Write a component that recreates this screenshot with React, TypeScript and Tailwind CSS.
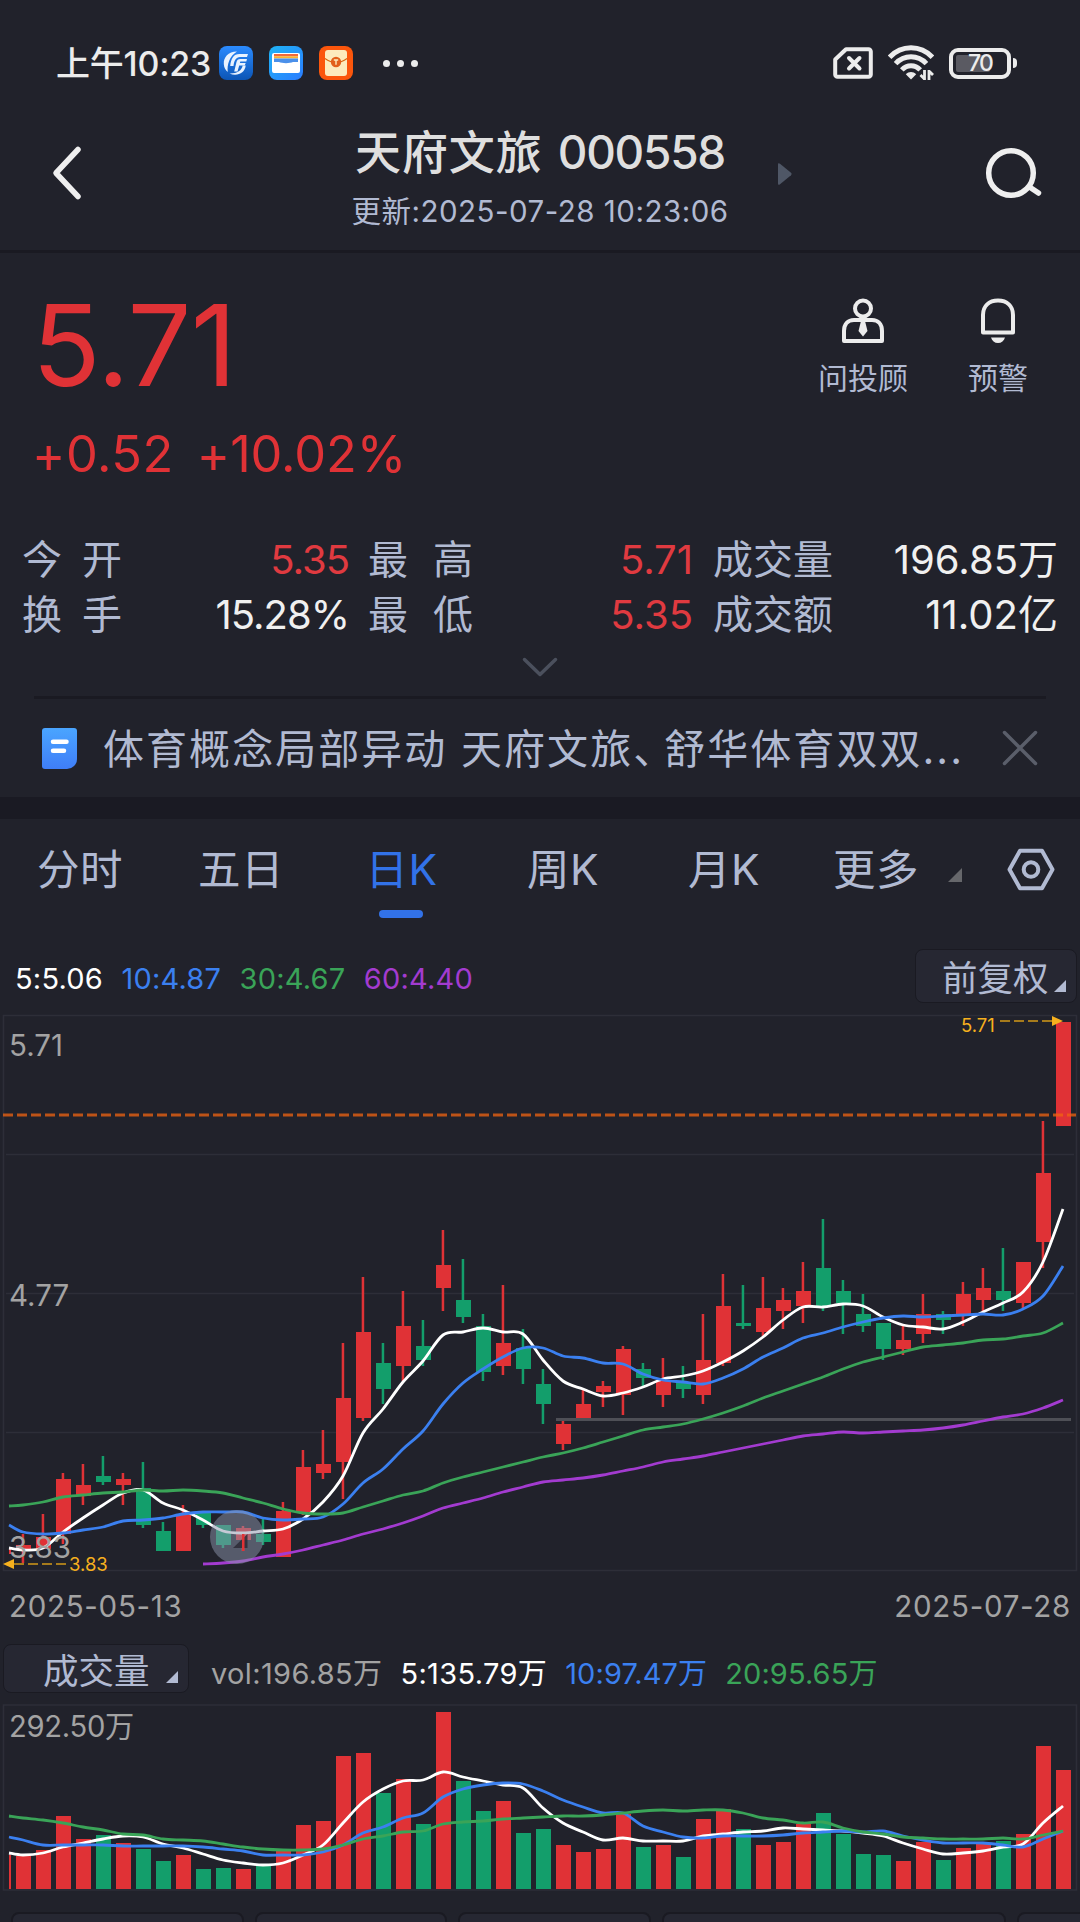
import type { ReactNode } from 'react';

type Dir = 'up' | 'down';
// direction, high, body top, body bottom, low
type Candle = [Dir, number, number, number, number];

const RED = '#e03236';
const GREEN = '#139e6b';
const BLUE = '#3b80f0';
const MA_GREEN = '#3aa458';
const PURPLE = '#a33bd0';

const STEP = 20;
const PLOT_LEFT = 9;

const candles: Candle[] = [
  ['up', 1548, 1548, 1554, 1554],
  ['up', 1534, 1545, 1549, 1563],
  ['up', 1514, 1537, 1549, 1549],
  ['up', 1473, 1479, 1534, 1544],
  ['up', 1464, 1485, 1496, 1505],
  ['down', 1456, 1476, 1482, 1485],
  ['up', 1473, 1479, 1485, 1505],
  ['down', 1462, 1488, 1525, 1528],
  ['down', 1522, 1531, 1551, 1551],
  ['up', 1505, 1514, 1551, 1551],
  ['down', 1511, 1513, 1525, 1528],
  ['down', 1525, 1525, 1545, 1548],
  ['up', 1526, 1528, 1540, 1551],
  ['down', 1519, 1534, 1542, 1545],
  ['up', 1502, 1511, 1557, 1557],
  ['up', 1450, 1467, 1512, 1515],
  ['up', 1430, 1464, 1473, 1479],
  ['up', 1343, 1398, 1462, 1499],
  ['up', 1277, 1332, 1418, 1421],
  ['down', 1343, 1363, 1389, 1404],
  ['up', 1291, 1326, 1366, 1381],
  ['down', 1320, 1346, 1360, 1366],
  ['up', 1230, 1265, 1288, 1311],
  ['down', 1259, 1300, 1317, 1323],
  ['down', 1314, 1326, 1372, 1381],
  ['up', 1285, 1343, 1366, 1375],
  ['down', 1329, 1348, 1369, 1384],
  ['down', 1369, 1384, 1404, 1424],
  ['up', 1421, 1424, 1444, 1450],
  ['up', 1390, 1404, 1418, 1418],
  ['up', 1381, 1386, 1392, 1407],
  ['up', 1346, 1349, 1395, 1415],
  ['down', 1363, 1369, 1378, 1387],
  ['up', 1358, 1380, 1395, 1407],
  ['down', 1366, 1383, 1389, 1398],
  ['up', 1314, 1360, 1395, 1404],
  ['up', 1274, 1306, 1363, 1366],
  ['down', 1285, 1323, 1326, 1329],
  ['up', 1277, 1308, 1332, 1336],
  ['up', 1288, 1300, 1311, 1329],
  ['up', 1262, 1291, 1306, 1323],
  ['down', 1219, 1268, 1306, 1311],
  ['down', 1280, 1291, 1303, 1334],
  ['down', 1294, 1314, 1326, 1332],
  ['down', 1323, 1323, 1349, 1360],
  ['up', 1325, 1340, 1349, 1355],
  ['up', 1294, 1314, 1334, 1343],
  ['down', 1311, 1314, 1320, 1334],
  ['up', 1282, 1294, 1314, 1326],
  ['up', 1268, 1288, 1300, 1311],
  ['down', 1248, 1291, 1300, 1311],
  ['up', 1262, 1262, 1303, 1308],
  ['up', 1121, 1173, 1242, 1268],
  ['up', 1022, 1022, 1126, 1126],
];

const ma5 = [
  1548, 1550, 1548, 1532, 1518, 1505, 1493, 1490, 1503, 1510, 1520, 1531, 1533, 1531, 1529, 1519, 1502, 1476,
  1433, 1409, 1382, 1361, 1335, 1332, 1328, 1332, 1334, 1360, 1381, 1389, 1396, 1393, 1387, 1379, 1376, 1371,
  1362, 1351, 1337, 1320, 1307, 1307, 1304, 1306, 1317, 1325, 1327, 1329, 1322, 1312, 1303, 1292, 1262, 1209,
];
const ma10 = [
  1525, 1532, 1534, 1533, 1530, 1527, 1521, 1520, 1518, 1514, 1512, 1512, 1512, 1518, 1520, 1519, 1517, 1504,
  1483, 1469, 1449, 1431, 1404, 1383, 1369, 1357, 1348, 1348, 1356, 1358, 1363, 1364, 1374, 1380, 1382, 1384,
  1378, 1369, 1357, 1348, 1338, 1333, 1327, 1322, 1318, 1316, 1317, 1316, 1315, 1314, 1315, 1309, 1296, 1266,
];
const ma30 = [
  1506, 1505, 1502, 1497, 1495, 1493, 1492, 1490, 1491, 1490, 1491, 1493, 1498, 1503, 1509, 1513, 1514, 1513,
  1507, 1501, 1495, 1491, 1483, 1477, 1472, 1467, 1462, 1457, 1453, 1448, 1442, 1436, 1430, 1427, 1424, 1419,
  1413, 1406, 1398, 1391, 1384, 1377, 1369, 1362, 1357, 1352, 1347, 1345, 1343, 1340, 1339, 1336, 1333, 1323,
];
// MA60 starts at the eleventh candle
const ma60 = [
  1564, 1563, 1561, 1557, 1554, 1550, 1545, 1540, 1534, 1529, 1523, 1516, 1508, 1503, 1498, 1492, 1487, 1482,
  1480, 1478, 1475, 1471, 1467, 1462, 1459, 1456, 1452, 1448, 1444, 1440, 1436, 1434, 1432, 1433, 1432, 1431,
  1430, 1428, 1425, 1421, 1417, 1414, 1408, 1400,
];

const volumes = [
  34, 33, 39, 73, 50, 54, 46, 40, 28, 34, 20, 21, 20, 24, 38, 64, 68, 133, 136, 96, 110, 65, 177, 108, 78, 88, 56,
  60, 44, 37, 40, 75, 42, 44, 32, 70, 80, 60, 44, 47, 65, 76, 55, 35, 34, 28, 47, 29, 41, 45, 48, 55, 143, 119,
];
const vol5 = [
  1853, 1855, 1853, 1847, 1843, 1839, 1836, 1837, 1844, 1848, 1854, 1860, 1863, 1865, 1863, 1855, 1845, 1823,
  1802, 1789, 1781, 1780, 1772, 1777, 1781, 1785, 1788, 1808, 1823, 1832, 1840, 1838, 1841, 1841, 1841, 1836,
  1834, 1832, 1831, 1828, 1829, 1830, 1831, 1833, 1836, 1843, 1849, 1854, 1853, 1851, 1847, 1844, 1823, 1806,
];
const vol10 = [
  1837, 1840, 1845, 1845, 1845, 1845, 1846, 1846, 1846, 1846, 1847, 1849, 1851, 1855, 1855, 1855, 1852, 1845,
  1833, 1827, 1818, 1813, 1797, 1789, 1785, 1783, 1784, 1791, 1800, 1807, 1813, 1813, 1826, 1832, 1837, 1838,
  1836, 1836, 1836, 1835, 1833, 1832, 1831, 1832, 1831, 1836, 1840, 1843, 1843, 1843, 1845, 1847, 1839, 1831,
];
const vol20 = [
  1816, 1818, 1820, 1823, 1827, 1830, 1834, 1835, 1839, 1840, 1841, 1844, 1847, 1849, 1850, 1850, 1849, 1845,
  1839, 1836, 1832, 1831, 1824, 1822, 1821, 1819, 1818, 1817, 1816, 1816, 1815, 1813, 1811, 1810, 1811, 1810,
  1810, 1813, 1818, 1820, 1823, 1822, 1828, 1832, 1834, 1837, 1838, 1839, 1839, 1839, 1838, 1839, 1835, 1831,
];

const candleX = (i: number) => 3 + i * STEP;

// smooth curve through every point
function curve(values: number[], start = 0) {
  const pts = values.map((y, i) => [Math.max(candleX(i + start), PLOT_LEFT), y]);
  let d = `M${pts[0][0]} ${pts[0][1]}`;
  for (let i = 0; i < pts.length - 1; i++) {
    const p0 = pts[i - 1] ?? pts[i];
    const p1 = pts[i];
    const p2 = pts[i + 1];
    const p3 = pts[i + 2] ?? p2;
    d += `C${p1[0] + (p2[0] - p0[0]) / 6} ${p1[1] + (p2[1] - p0[1]) / 6} ${p2[0] - (p3[0] - p1[0]) / 6} ${p2[1] - (p3[1] - p1[1]) / 6} ${p2[0]} ${p2[1]}`;
  }
  return d;
}

function Line({ values, color, start }: { values: number[]; color: string; start?: number }) {
  return <path d={curve(values, start)} fill="none" stroke={color} strokeWidth="2.8" strokeLinejoin="round" />;
}

function StatusBar() {
  return (
    <div className="flex h-[98px] items-center pt-7 pl-[56px] pr-[63px] text-[#ececec]">
      <span className="w-[163px] pt-[2px] text-[34px] leading-none font-medium tracking-[-0.200px] whitespace-nowrap">上午10:23</span>
      <div className="flex items-center gap-4">
        <svg width="34" height="34" viewBox="0 0 34 34">
          <defs>
            <linearGradient id="brokerBg" x1="0" y1="0" x2="0" y2="1">
              <stop offset="0" stopColor="#2b8bff" />
              <stop offset="1" stopColor="#0c55b5" />
            </linearGradient>
          </defs>
          <rect width="34" height="34" rx="8" fill="url(#brokerBg)" />
          <path d="M18 5.500C9 5.500 4.500 11.500 4.800 18c.3 4 1.700 6.300 4 8C7.800 19 10.500 10 18 5.500Z" fill="#e9f3ff" />
          <path d="M29 8h-8.500c-6 0-8.500 4.500-9.300 12h3.300c.6-5.500 2.500-9 6.500-9h7Z" fill="#e9f3ff" />
          <path d="M28 13h-6.500c-2.500 0-3.500 1-4 3l-2.300 9.500h3.300l1.700-6h5.500l1-2.600h-5.800l.4-1.400h6Z" fill="#e9f3ff" />
          <path d="M10.500 27.500c7.500 3.500 15.500-.5 16.200-8h-3c-1 5-5.500 8.200-13.200 8Z" fill="#e9f3ff" />
        </svg>
        <svg width="34" height="34" viewBox="0 0 34 34">
          <defs>
            <linearGradient id="walletBg" x1="0" y1="0" x2="1" y2="1">
              <stop offset="0" stopColor="#1fb4f5" />
              <stop offset="1" stopColor="#2b7cff" />
            </linearGradient>
          </defs>
          <rect width="34" height="34" rx="8" fill="url(#walletBg)" />
          <rect x="3" y="7" width="28" height="20" rx="2" fill="#fff" />
          <rect x="5" y="8" width="24" height="2.200" fill="#f0693c" />
          <rect x="5" y="10.200" width="24" height="2.200" fill="#f9b233" />
          <path d="M5 12.400h24v3.600h-5c-3 1.500-11 1.500-14 0H5Z" fill="#4a90ea" />
        </svg>
        <svg width="34" height="34" viewBox="0 0 34 34">
          <rect width="34" height="34" rx="8" fill="#fb560c" />
          <rect x="6" y="4" width="22" height="26" rx="3" fill="#fdebbd" />
          <path d="M6 12.500c4 3 7 4 11 4s7-1 11-4" fill="none" stroke="#d9660f" strokeWidth="1.200" />
          <circle cx="17" cy="16" r="5.200" fill="#e2601a" />
          <path d="M14.800 14h4.400M17 14v4.800" stroke="#fdebbd" strokeWidth="1.400" />
        </svg>
      </div>
      <div className="ml-[30px] flex gap-[7px]">
        <i className="size-[7px] rounded-full bg-[#ececec]" />
        <i className="size-[7px] rounded-full bg-[#ececec]" />
        <i className="size-[7px] rounded-full bg-[#ececec]" />
      </div>

      <div className="ml-auto flex items-center">
        <svg width="40" height="32" viewBox="0 0 40 32" fill="none" stroke="#ececec">
          <path d="M13 2.200h22.500a2.300 2.300 0 0 1 2.300 2.300v23a2.300 2.300 0 0 1-2.300 2.300h-31a2.300 2.300 0 0 1-2.300-2.300V12.500Z" strokeWidth="4" strokeLinejoin="round" />
          <path d="m16 11 10.500 10.500M26.500 11 16 21.500" strokeWidth="4" strokeLinecap="round" />
        </svg>
        <svg className="ml-[15px]" width="46" height="36" viewBox="0 0 46 36" fill="none" stroke="#ececec" strokeWidth="5">
          <path d="M1.600 12.300C13.500-.3 32.500-.3 44.400 12.300" />
          <path d="M7.600 18.600c8.500-9.100 22.300-9.100 30.800 0" />
          <path d="M13.800 24.900c5.200-5.500 13.200-5.500 18.400 0" />
          <path d="M17.800 29.300c3-3 7.400-3 10.400 0L23 34.500Z" fill="#ececec" stroke="none" />
          <path d="M36.500 25v10M36.500 34l-4-4M41 35V25M41 26l4 4" strokeWidth="2.800" />
        </svg>
        <div className="ml-[15px] flex h-[31px] w-[62px] items-center rounded-[9px] border-4 border-[#ececec] p-[3px]">
          <div className="h-full w-[34px] rounded-[2px] bg-[#5a5a62]" />
          <span className="-ml-[22px] pt-px text-[23px] leading-none font-medium tracking-[-1.800px]">70</span>
        </div>
        <i className="ml-[2px] h-[10px] w-1 rounded-r bg-[#ececec]" />
      </div>
    </div>
  );
}

function Header() {
  return (
    <header className="flex h-[155px] items-center justify-between border-b-[3px] border-[#1a1a22] pr-[38px] pl-[50px]">
      <svg width="34" height="58" viewBox="0 0 34 58" fill="none" stroke="#efefef" strokeWidth="5.500" strokeLinecap="round" strokeLinejoin="round">
        <path d="M28 4.500 6 28l22 23.500" />
      </svg>
      <div className="ml-[268px] flex w-[376px] flex-col items-center pt-[7px] whitespace-nowrap">
        <h1 className="text-[46px] leading-[64px] font-medium tracking-[0.900px] text-[#dfdfdf]">
          天府文旅 <span className="ml-[2px] tracking-[-1.300px]">000558</span>
        </h1>
        <p className="mt-[3px] text-[29.500px] leading-[48px] tracking-[0.500px] text-[#b1bad2]">更新:2025-07-28 10:23:06</p>
      </div>
      <svg className="ml-[50px]" width="14" height="22" viewBox="0 0 14 22">
        <path d="M0 1.500C0 0 1 0 2 .8l11 9c.8.800.8 1.600 0 2.400l-11 9c-1 .8-2 .8-2-.7Z" fill="#4f5766" />
      </svg>
      <svg className="ml-auto" width="58" height="54" viewBox="0 0 58 54" fill="none" stroke="#efefef" strokeWidth="5.500" strokeLinecap="round">
        <circle cx="27" cy="26" r="22.300" />
        <path d="m45.500 40 9 6" />
      </svg>
    </header>
  );
}

function Action({ label, children }: { label: string; children: ReactNode }) {
  return (
    <div className="flex flex-col items-center">
      <svg width="44" height="48" viewBox="0 0 44 48" fill="none" stroke="#ececec" strokeWidth="4">
        {children}
      </svg>
      <span className="mt-[13px] text-[30px] leading-[40px] text-[#b1bad2]">{label}</span>
    </div>
  );
}

interface StatProps {
  label: string;
  value: string;
  up?: boolean;
  gap?: string;
  tight?: boolean;
}

function Stat({ label, value, up, gap = '', tight }: StatProps) {
  return (
    <div className="flex h-[55px] items-center justify-between">
      <span className={`flex text-[40px] leading-none text-[#b1bad2] ${gap}`}>
        {label.split('').map((c) => (
          <span key={c}>{c}</span>
        ))}
      </span>
      <span
        className={`text-[40px] leading-none ${up ? 'text-[#e03a40]' : 'text-[#f0f0f0]'} ${tight ? '-mr-px tracking-[-1px]' : ''}`}
      >
        {value}
      </span>
    </div>
  );
}

function Quote() {
  return (
    <section className="flex flex-col">
      <div className="flex justify-between pt-9 pr-[52px] pl-[32px] text-[#e03236]">
        <div>
          <div className="text-[113px] leading-[112px] tracking-[-0.600px]">5.71</div>
          <div className="mt-[23px] flex gap-[23px] text-[50.500px] leading-[60px]">
            <span className="tracking-[0.500px]">+0.52</span>
            <span className="tracking-[-0.100px]">+10.02%</span>
          </div>
        </div>
        <div className="flex gap-[60px] pt-2">
          <Action label="问投顾">
            <circle cx="22" cy="11.500" r="8" />
            <path d="M3 44V34c0-7 4-11 10-11h18c6 0 10 4 10 11v10Z" strokeLinejoin="round" />
            <path d="M20 24h4l2.500 10-4.500 5.500-4.500-5.500Z" fill="#ececec" stroke="none" />
          </Action>
          <Action label="预警">
            <path d="M7 35.500V18C7 9 13 3.500 22 3.500S37 9 37 18v17.500Z" strokeLinejoin="round" />
            <path d="M15 40.500h14c-1 3.500-3.500 5.500-7 5.500s-6-2-7-5.500Z" fill="#ececec" stroke="none" />
          </Action>
        </div>
      </div>

      <div className="mt-[48px] grid grid-cols-[326px_325px_345px] gap-x-[20px] pl-[22px]">
        <Stat label="今开" value="5.35" up gap="gap-5" tight />
        <Stat label="最高" value="5.71" up gap="gap-[25px]" />
        <Stat label="成交量" value="196.85万" />
        <Stat label="换手" value="15.28%" gap="gap-5" tight />
        <Stat label="最低" value="5.35" up gap="gap-[25px]" />
        <Stat label="成交额" value="11.02亿" />
      </div>

      <svg className="mt-[15px] self-center" width="36" height="20" viewBox="0 0 36 20" fill="none" stroke="#4b505d" strokeWidth="3.500" strokeLinecap="round" strokeLinejoin="round">
        <path d="m2.500 2.500 15.500 15 15.500-15" />
      </svg>
      <div className="mx-[34px] mt-[19px] h-[3px] bg-[#1a1a22]" />
    </section>
  );
}

function NewsBar() {
  return (
    <div className="flex h-[98px] items-center pr-[42px] pl-[42px]">
      <svg width="35" height="41" viewBox="0 0 35 41">
        <defs>
          <linearGradient id="newsBg" x1="0" y1="0" x2="0" y2="1">
            <stop offset="0" stopColor="#4aa5ff" />
            <stop offset="1" stopColor="#3f7ef8" />
          </linearGradient>
        </defs>
        <path d="M3 0h29a3 3 0 0 1 3 3v28a10 10 0 0 1-10 10H3a3 3 0 0 1-3-3V3a3 3 0 0 1 3-3Z" fill="url(#newsBg)" />
        <path d="M11 13.700h13.500M11 22.700h11" stroke="#fff" strokeWidth="4.500" strokeLinecap="round" />
      </svg>
      <p className="ml-[26px] pt-[2px] text-[41px] leading-[60px] tracking-[2.050px] whitespace-nowrap text-[#b1bad2]">
        体育概念局部异动 天府文旅<span className="tracking-[-10px]">、</span>舒华体育双双...
      </p>
      <svg className="ml-auto" width="36" height="36" viewBox="0 0 36 36" fill="none" stroke="#5a5e6a" strokeWidth="3.500" strokeLinecap="round">
        <path d="m2.500 2.500 31 31M33.500 2.500l-31 31" />
      </svg>
    </div>
  );
}

const periods = ['分时', '五日', '日K', '周K', '月K'];

function PeriodTabs() {
  return (
    <nav className="flex h-[101px] items-center text-[42.500px] leading-none tracking-[0.500px] text-[#b1bad2]">
      {periods.map((p) =>
        p === '日K' ? (
          <div key={p} className="relative flex h-full w-[161px] items-center justify-center pt-[2px] pr-[2px] text-[#3272e8]">
            {p}
            <i className="absolute bottom-[2px] left-[57px] h-2 w-11 rounded-full bg-[#3272e8]" />
          </div>
        ) : (
          <div key={p} className="flex w-[161px] justify-center pt-[2px] pr-px">{p}</div>
        )
      )}
      <span className="ml-[28px] w-[115px] pt-[2px]">更多</span>
      <svg className="mt-[11px]" width="14" height="14" viewBox="0 0 14 14">
        <path d="M14 0v14H0Z" fill="#66676b" />
      </svg>
      <svg className="ml-[45px]" width="48" height="44" viewBox="0 0 48 44" fill="none" stroke="#b1bad2" strokeWidth="4">
        <path d="M13 2.700h22L45.500 21.500 35 40.300H13L2.500 21.500Z" strokeLinejoin="round" />
        <circle cx="24" cy="21.500" r="7.300" />
      </svg>
    </nav>
  );
}

function Corner() {
  return (
    <svg width="12" height="12" viewBox="0 0 12 12">
      <path d="M12 0v12H0Z" fill="#b1bad2" />
    </svg>
  );
}

function MaLegend() {
  return (
    <div className="mt-[29px] flex h-[54px] items-center justify-between pr-[3px] pl-[15px]">
      <div className="flex gap-[18.500px] pt-[5px] text-[29px] leading-none tracking-[0.200px]">
        <span className="text-white">5:5.06</span>
        <span className="text-[#3b80f0]">10:4.87</span>
        <span className="text-[#3aa458]">30:4.67</span>
        <span className="text-[#a33bd0]">60:4.40</span>
      </div>
      <div className="flex h-[54px] w-[162px] items-center rounded-lg border border-[#1a1a22] bg-[#262732] pl-[26px] text-[35.500px] leading-none text-[#b1bad2]">
        <span className="pt-[6px]">前复权</span>
        <span className="mt-[20px] ml-[5px]">
          <Corner />
        </span>
      </div>
    </div>
  );
}

function KLineChart() {
  return (
    <svg className="block" width="1080" height="573" viewBox="0 1003 1080 573">
      <defs>
        <clipPath id="plot">
          <rect x={PLOT_LEFT} y="1003" width="1071" height="573" />
        </clipPath>
      </defs>
      <g stroke="#2d2e38">
        <path d="M3.500 1015.500H1076.500V1570.500H3.500Z" fill="none" strokeWidth="1.600" />
        <path d="M6 1154.500H1074M6 1293.500H1074M6 1432.500H1074" strokeWidth="1.400" />
      </g>

      <g clipPath="url(#plot)">
        {candles.map(([dir, high, top, bottom, low], i) => {
          const x = candleX(i);
          return (
            <g key={i} fill={dir === 'up' ? RED : GREEN}>
              <rect x={x - 1.3} y={high} width="2.500" height={low - high} />
              <rect x={x - 7} y={top} width="15" height={bottom - top} />
            </g>
          );
        })}
      </g>

      <path d="M556 1419.500H1071" stroke="#4e4f56" strokeWidth="3" />
      <path d="M3 1115H1076" stroke="#f26411" strokeOpacity="0.750" strokeWidth="3" strokeDasharray="10 4" />

      <g fontSize="29.500" fill="#a3a3a3">
        <text x="9" y="1056">5.71</text>
        <text x="9" y="1306">4.77</text>
      </g>

      <Line values={ma60} color={PURPLE} start={10} />
      <Line values={ma5} color="#ffffff" />
      <Line values={ma10} color={BLUE} />
      <Line values={ma30} color={MA_GREEN} />
      <text x="9" y="1557.500" fontSize="29.500" fill="#a3a3a3">3.83</text>

      {/* highest / lowest markers */}
      <g fill="#f6b01e" fontSize="18.500">
        <text x="961" y="1032">5.71</text>
        <path d="M1000 1021H1052" stroke="#a67b1c" strokeWidth="2" strokeDasharray="10 4" />
        <path d="M1052 1016l11 5-11 5Z" />
        <text x="69" y="1571">3.83</text>
        <path d="M14 1564H66" stroke="#a67b1c" strokeWidth="2" strokeDasharray="10 4" />
        <path d="M14 1559l-11 5 11 5Z" />
      </g>

      {/* expand handle */}
      <circle cx="237" cy="1537" r="27" fill="#8b93ac" fillOpacity="0.500" />
      <path d="M247.500 1534v14H233Z" fill="#2b2c36" fillOpacity="0.850" />
      <path d="M242 1534h2.500v17H242Z" fill={RED} />
    </svg>
  );
}

function VolumeLegend() {
  return (
    <div className="mt-2 flex h-[49px] items-center pl-[3px]">
      <div className="flex h-[49px] w-[186px] items-center rounded-lg border border-[#1a1a22] bg-[#262732] pl-[39px] text-[35.500px] leading-none text-[#b1bad2]">
        <span className="pt-[6px]">成交量</span>
        <span className="mt-[16px] ml-[16px]">
          <Corner />
        </span>
      </div>
      <div className="flex gap-[18px] pt-[9px] pl-[22px] text-[29px] leading-none tracking-[0.350px] whitespace-nowrap">
        <span className="text-[#a3a3a3]">vol:196.85万</span>
        <span className="text-white">5:135.79万</span>
        <span className="tracking-[0.100px] text-[#3b80f0]">10:97.47万</span>
        <span className="tracking-[0.100px] text-[#3aa458]">20:95.65万</span>
      </div>
    </div>
  );
}

function VolumeChart() {
  return (
    <svg className="block" width="1080" height="219" viewBox="0 1693 1080 219">
      <path d="M3.500 1705H1076.500V1890H3.500Z" fill="none" stroke="#2d2e38" strokeWidth="1.600" />
      {volumes.map((h, i) => {
        const left = Math.max(candleX(i) - 7, PLOT_LEFT);
        return (
          <rect
            key={i}
            x={left}
            y={1889 - h}
            width={candleX(i) + 8 - left}
            height={h}
            fill={candles[i][0] === 'up' ? RED : GREEN}
          />
        );
      })}
      <text x="9" y="1737" fontSize="29.200" letterSpacing="-0.300" fill="#a3a3a3">292.50万</text>
      <Line values={vol5} color="#ffffff" />
      <Line values={vol10} color={BLUE} />
      <Line values={vol20} color={MA_GREEN} />
    </svg>
  );
}

function IndicatorBar() {
  return (
    <div className="grid h-[60px] grid-cols-[233px_192px_193px_344px_233px] gap-[11px] pl-[11px]">
      {[0, 1, 2, 3, 4].map((i) => (
        <div key={i} className="rounded-lg border-2 border-[#1a1a22] bg-[#262732]" />
      ))}
    </div>
  );
}

export default function App() {
  return (
    <main className="h-[1922px] w-[1080px] overflow-hidden bg-[#21222b] font-['Inter','Noto_Sans_CJK_SC',sans-serif]">
      <StatusBar />
      <Header />
      <Quote />
      <NewsBar />
      <div className="h-[22px] bg-[#1a1a23]" />
      <PeriodTabs />
      <MaLegend />
      <KLineChart />
      <div className="flex h-[60px] items-center justify-between pt-[2px] pr-[9px] pl-[9px] text-[29.500px] leading-none tracking-[0.700px] text-[#a3a3a3]">
        <span>2025-05-13</span>
        <span>2025-07-28</span>
      </div>
      <VolumeLegend />
      <VolumeChart />
      <IndicatorBar />
    </main>
  );
}
